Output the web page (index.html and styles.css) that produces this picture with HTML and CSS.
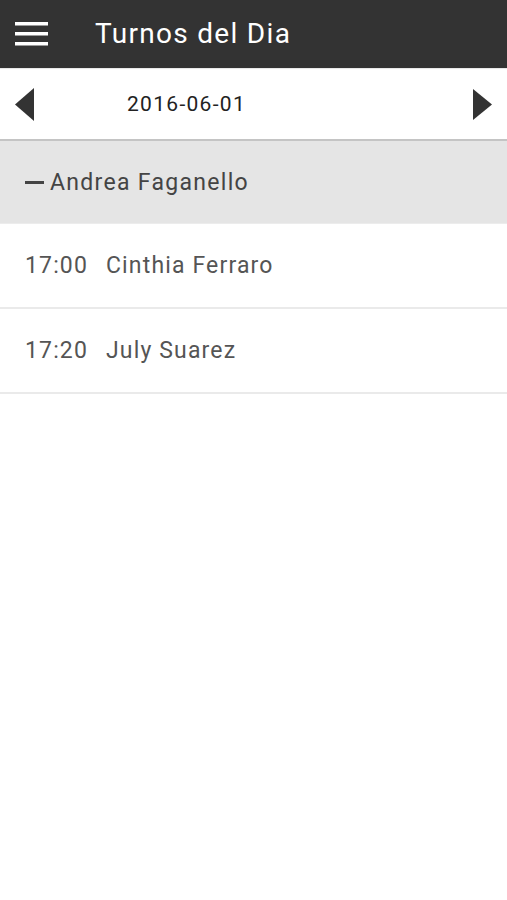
FILE: index.html
```html
<!DOCTYPE html>
<html>
<head>
<meta charset="utf-8">
<link rel="stylesheet" href="styles.css">
</head>
<body>
<header class="topbar">
  <svg class="menu" width="34" height="26" viewBox="0 0 34 26">
    <rect x="0" y="1" width="33" height="3.5" fill="#fff"/>
    <rect x="0" y="11" width="33" height="3.5" fill="#fff"/>
    <rect x="0" y="21" width="33" height="3.5" fill="#fff"/>
  </svg>
  <h1 class="title">Turnos del Dia</h1>
</header>
<nav class="datebar">
  <svg class="arrow" width="20" height="33" viewBox="0 0 20 33"><polygon points="19,0 19,33 0,16.5" fill="#333"/></svg>
  <div class="date">2016-06-01</div>
  <svg class="arrow" width="20" height="31" viewBox="0 0 20 31"><polygon points="1,0 1,31 20,15.5" fill="#333"/></svg>
</nav>
<section class="group">
  <div class="group-head"><span class="dash"></span>Andrea Faganello</div>
  <div class="row"><span class="time">17:00</span><span class="name">Cinthia Ferraro</span></div>
  <div class="row"><span class="time">17:20</span><span class="name">July Suarez</span></div>
</section>
</body>
</html>
```
FILE: styles.css
```css
html, body {
  margin: 0;
  padding: 0;
  background: #fff;
  font-family: Roboto, "Noto Sans", sans-serif;
}
.topbar {
  height: 68px;
  background: #333333;
  display: flex;
  align-items: center;
  padding-left: 15px;
  border-bottom: 1px solid #e8e8e8;
}
.menu { display: block; }
.title {
  margin: -2px 0 0 46px;
  color: #fff;
  font-size: 28px;
  font-weight: 400;
  letter-spacing: 1.3px;
}
.datebar {
  height: 70px;
  display: flex;
  align-items: center;
  padding: 0 15px;
  border-bottom: 2px solid #c4c4c4;
}
.arrow { display: block; }
.date {
  margin-left: 92px;
  font-size: 21px;
  color: #222;
  letter-spacing: 1.3px;
}
.datebar .arrow:last-child { margin-left: auto; }
.group-head {
  height: 82px;
  background: #e5e5e5;
  display: flex;
  align-items: center;
  padding-left: 25px;
  font-size: 23px;
  color: #444;
  letter-spacing: 1.3px;
  border-bottom: 1px solid #ececec;
}
.dash {
  display: inline-block;
  width: 19px;
  height: 3px;
  background: #444;
  margin-right: 6px;
}
.row {
  height: 83px;
  display: flex;
  align-items: center;
  padding-left: 25px;
  font-size: 23px;
  color: #555;
  letter-spacing: 1.15px;
  border-bottom: 2px solid #eaeaea;
}
.time { width: 81px; }
```
